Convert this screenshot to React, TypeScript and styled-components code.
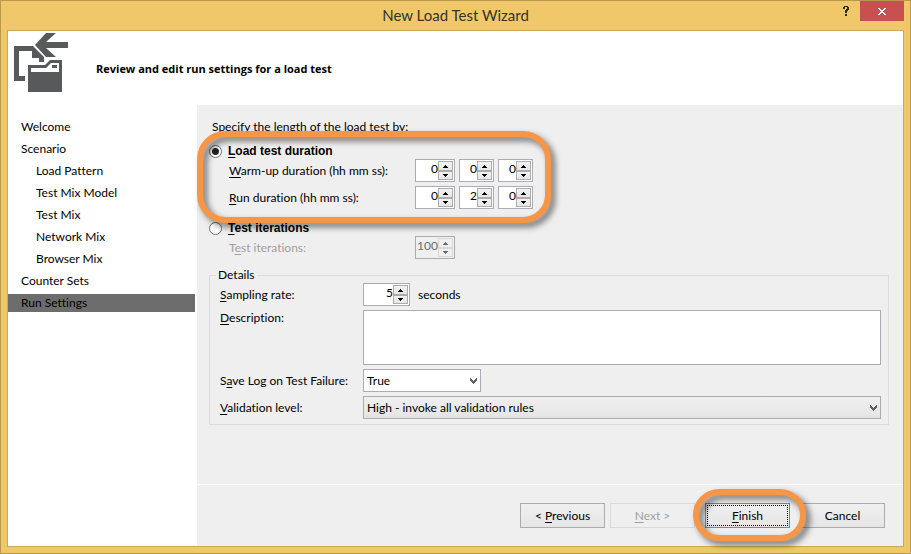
import React, { useId, useState } from "react";
import styled, { createGlobalStyle, css } from "styled-components";

const GlobalStyle = createGlobalStyle`
  *, *::before, *::after { box-sizing: border-box; }
  body { margin: 0; }
  body, button, input, select, textarea {
    font-family: Lato, "Open Sans", sans-serif;
    font-size: 12px;
    line-height: 16px;
    font-variant-ligatures: none;
    color: #000;
  }
  u { text-underline-offset: 2px; text-decoration-skip-ink: none; }
`;

const orangeRing = css`
  content: "";
  position: absolute;
  border: 6px solid #f79646;
  filter: drop-shadow(4px 4px 3px rgba(0, 0, 0, 0.55));
  pointer-events: none;
`;

const Window = styled.div`
  display: flex;
  flex-direction: column;
  min-height: 100vh;
  padding: 0 6px 6px;
  background: #f0c869;
  border: 1px solid #b8994f;
`;

const TitleBar = styled.header`
  position: relative;
  display: flex;
  justify-content: center;
  height: 29px;
`;

const Title = styled.h1`
  margin: 0;
  font-size: 15px;
  font-weight: 400;
  line-height: 29px;
  color: #33332b;
`;

const TitleActions = styled.div`
  position: absolute;
  top: 0;
  right: 0;
  display: flex;
`;

const HelpButton = styled.button`
  width: 28px;
  height: 20px;
  padding: 0;
  border: 0;
  background: none;
`;

const CloseButton = styled.button`
  width: 44px;
  height: 20px;
  padding: 0;
  border: 0;
  background: #c75050;
`;

const TitleGlyph = styled.svg`
  display: block;
  margin: 0 auto;
`;

const Client = styled.div`
  flex: 1;
  display: flex;
  flex-direction: column;
  background: #fff;
  border: 1px solid #cda751;
`;

const Banner = styled.div`
  display: flex;
  align-items: flex-start;
  height: 74px;
  padding-left: 6px;
`;

const WizardIcon = styled.svg`
  flex: none;
  margin-top: 2px;
`;

const BannerText = styled.h2`
  margin: 30px 0 0 28px;
  font-family: "Open Sans", sans-serif;
  font-size: 11px;
  line-height: 16px;
  font-weight: 700;
`;

const Body = styled.div`
  flex: 1;
  display: flex;
`;

const StepList = styled.nav`
  flex: none;
  width: 189px;
  padding: 13px 2px 0 0;
  display: flex;
  flex-direction: column;
  gap: 4px;
`;

const Step = styled.a<{ $nested?: boolean; $current?: boolean }>`
  display: block;
  height: 18px;
  line-height: 18px;
  padding-left: ${(p) => (p.$nested ? 28 : 13)}px;
  color: #000;
  text-decoration: none;
  background: ${(p) => (p.$current ? "#6d6d6d" : "transparent")};
`;

const Main = styled.main`
  flex: 1;
  display: flex;
  flex-direction: column;
  background: #efefef;
`;

const Settings = styled.form`
  flex: 1;
  padding: 14px 14px 0 12px;
`;

const Intro = styled.p`
  margin: 0 0 0 3px;
`;

const DurationGroup = styled.div`
  position: relative;
  padding-top: 8px;
  &::after {
    ${orangeRing}
    top: -4px;
    left: -12px;
    width: 354px;
    height: 92px;
    border-radius: 28px;
  }
`;

const RadioLabel = styled.label`
  display: flex;
  align-items: center;
  gap: 6px;
  height: 16px;
  font: 700 12px/16px "Liberation Sans", sans-serif;
`;

const Radio = styled.input`
  appearance: none;
  width: 13px;
  height: 13px;
  margin: 0;
  border: 1px solid #6e6e6e;
  border-radius: 50%;
  background: #fff;
  &:checked {
    background: radial-gradient(circle, #222 0 3px, #fff 4px);
  }
`;

const TimeRows = styled.div`
  display: grid;
  gap: 4px;
`;

const TimeRow = styled.div<{ $disabled?: boolean }>`
  display: grid;
  grid-template-columns: 182px auto;
  justify-content: start;
  align-items: center;
  gap: 4px;
  padding-left: 20px;
  color: ${(p) => (p.$disabled ? "#a0a0a0" : "#000")};
`;

const Spinners = styled.div`
  display: flex;
  gap: 4px;
`;

const SpinBox = styled.span<{ $width: number; $disabled?: boolean }>`
  display: flex;
  width: ${(p) => p.$width}px;
  height: 23px;
  padding: 1px 1px 1px 0;
  border: 1px solid #abadb3;
  background: ${(p) => (p.$disabled ? "#efefef" : "#fff")};
`;

const SpinInput = styled.input`
  flex: 1;
  min-width: 0;
  height: 16px;
  padding: 0;
  border: 0;
  outline: 0;
  background: none;
  text-align: right;
  &:disabled { color: #6d6d6d; }
`;

const SpinButtons = styled.span`
  display: grid;
  grid-template-rows: 10px 9px;
  width: 15px;
  background: #efefef;
`;

const SpinButton = styled.button`
  display: grid;
  place-items: center;
  padding: 0;
  border: 1px solid #acacac;
  background: linear-gradient(#f2f2f2, #e6e6e6);
  &:disabled { border-color: #d9d9d9; background: #efefef; }
`;

const IterationsGroup = styled.div`
  padding-top: 11px;
  display: grid;
`;

const Details = styled.fieldset`
  min-width: 0;
  margin: 8px 0 0;
  padding: 0 7px 5px 10px;
  border: 1px solid #dcdcdc;
`;

const Legend = styled.legend`
  margin-left: -4px;
  padding: 0 2px;
`;

const FieldGrid = styled.div`
  display: grid;
  grid-template-columns: 139px 1fr;
  gap: 4px;
  align-items: center;
`;

const FieldLabel = styled.label<{ $top?: boolean }>`
  align-self: ${(p) => (p.$top ? "start" : "center")};
  white-space: nowrap;
`;

const Inline = styled.div`
  display: flex;
  align-items: center;
  gap: 8px;
`;

const TextArea = styled.textarea`
  display: block;
  width: 100%;
  height: 55px;
  resize: none;
  border: 1px solid #abadb3;
  background: #fff;
`;

const SelectWrap = styled.div<{ $width: string }>`
  display: grid;
  width: ${(p) => p.$width};
  align-items: center;
  & > * { grid-area: 1 / 1; }
  & > svg { justify-self: end; margin-right: 4px; pointer-events: none; }
`;

const Select = styled.select<{ $flat?: boolean }>`
  appearance: none;
  width: 100%;
  height: 23px;
  padding: 0 3px;
  border: 1px solid ${(p) => (p.$flat ? "#abadb3" : "#acacac")};
  border-radius: 0;
  background: ${(p) => (p.$flat ? "#fff" : "linear-gradient(#f0f0f0, #e4e4e4)")};
`;

const Footer = styled.footer`
  display: flex;
  justify-content: flex-end;
  height: 62px;
  padding: 18px 18px 0 0;
  border-top: 1px solid #fff;
`;

const WizardButton = styled.button<{ $gap?: number }>`
  width: 85px;
  height: 25px;
  margin-left: ${(p) => p.$gap ?? 10}px;
  padding: 0;
  border: 1px solid #acacac;
  background: linear-gradient(#f0f0f0, #e5e5e5);
  &:disabled {
    color: #a0a0a0;
    border-color: #d9d9d9;
    background: #efefef;
  }
`;

const DefaultButton = styled(WizardButton)`
  position: relative;
  border-color: #3399ff;
  outline: 1px dotted #000;
  outline-offset: -3px;
  &::after {
    ${orangeRing}
    top: -15px;
    left: -13px;
    width: 113px;
    height: 52px;
    border-radius: 26px;
  }
`;

function Arrow({ down, muted }: { down?: boolean; muted?: boolean }) {
  return (
    <svg width="5" height="3" viewBox="0 0 5 3" shapeRendering="crispEdges" aria-hidden="true">
      <path d={down ? "M0 0h5v1h-1v1h-1v1h-1v-1h-1v-1h-1z" : "M2 0h1v1h1v1h1v1h-5v-1h1v-1h1z"} fill={muted ? "#6d6d6d" : "#000"} />
    </svg>
  );
}

function Chevron() {
  return (
    <svg width="7" height="6" viewBox="0 0 7 6" shapeRendering="crispEdges" aria-hidden="true">
      <path d="M0 0h1v1h1v1h1v1h1v-1h1v-1h1v-1h1v3h-1v1h-1v1h-1v1h-1v-1h-1v-1h-1v-1h-1z" fill="#606060" />
    </svg>
  );
}

type SpinnerProps = { id?: string; label?: string; initial: number; width: number; disabled?: boolean };

function Spinner({ id, label, initial, width, disabled }: SpinnerProps) {
  const [value, setValue] = useState(initial);
  return (
    <SpinBox $width={width} $disabled={disabled}>
      <SpinInput
        id={id}
        aria-label={label}
        inputMode="numeric"
        value={value}
        disabled={disabled}
        onChange={(e) => setValue(Number(e.target.value) || 0)}
      />
      <SpinButtons>
        <SpinButton type="button" aria-label="Increase" disabled={disabled} onClick={() => setValue(value + 1)}>
          <Arrow muted={disabled} />
        </SpinButton>
        <SpinButton type="button" aria-label="Decrease" disabled={disabled} onClick={() => setValue(Math.max(0, value - 1))}>
          <Arrow down muted={disabled} />
        </SpinButton>
      </SpinButtons>
    </SpinBox>
  );
}

function Duration({ mnemonic, rest, values }: { mnemonic: string; rest: string; values: number[] }) {
  const id = useId();
  return (
    <TimeRow>
      <label htmlFor={id}><u>{mnemonic}</u>{rest}</label>
      <Spinners>
        <Spinner id={id} initial={values[0]} width={40} />
        <Spinner label="Minutes" initial={values[1]} width={35} />
        <Spinner label="Seconds" initial={values[2]} width={35} />
      </Spinners>
    </TimeRow>
  );
}

const steps = [
  { name: "Welcome" },
  { name: "Scenario" },
  { name: "Load Pattern", nested: true },
  { name: "Test Mix Model", nested: true },
  { name: "Test Mix", nested: true },
  { name: "Network Mix", nested: true },
  { name: "Browser Mix", nested: true },
  { name: "Counter Sets" },
  { name: "Run Settings", current: true },
];

export default function App() {
  const [mode, setMode] = useState("duration");
  return (
    <>
      <GlobalStyle />
      <Window>
        <TitleBar>
          <Title>New Load Test Wizard</Title>
          <TitleActions>
            <HelpButton type="button" aria-label="Help">
              <TitleGlyph width="7" height="10" viewBox="0 0 7 10" shapeRendering="crispEdges">
                <path d="M1 0h4v1h1v3h-1v1h-1v2h-2v-3h1v-1h1v-2h-2v2h-2v-2h1zM2 8h2v2h-2z" fill="#2a2820" />
              </TitleGlyph>
            </HelpButton>
            <CloseButton type="button" aria-label="Close">
              <TitleGlyph width="8" height="7" viewBox="0 0 8 7" shapeRendering="crispEdges">
                <path d="M0 0h2v1h1v1h2v-1h1v-1h2v1h-1v1h-1v1h-1v1h1v1h1v1h1v1h-2v-1h-1v-1h-2v1h-1v1h-2v-1h1v-1h1v-1h1v-1h-1v-1h-1v-1h-1z" fill="#fff" />
              </TitleGlyph>
            </CloseButton>
          </TitleActions>
        </TitleBar>
        <Client>
          <Banner>
            <WizardIcon width="54" height="59" viewBox="0 0 54 59" aria-hidden="true">
              <g fill="#58595b">
                <path d="M32 0h10L32 9h22v6H32l10 9H32L21 12z" />
                <path d="M0 13h19l11 11v5h-5v-4h-7v-7H5v25h6v5H0z" />
                <path fillRule="evenodd" d="M14 32h17l5-5h12v32H14zM17 35v4h28v-9h-8l-5 5zM38 32h5v3h-5z" />
              </g>
            </WizardIcon>
            <BannerText>Review and edit run settings for a load test</BannerText>
          </Banner>
          <Body>
            <StepList aria-label="Wizard steps">
              {steps.map((s) => (
                <Step key={s.name} href="#" $nested={s.nested} $current={s.current} aria-current={s.current ? "step" : undefined}>
                  {s.name}
                </Step>
              ))}
            </StepList>
            <Main>
              <Settings>
                <Intro>Specify the length of the load test by:</Intro>
                <DurationGroup>
                  <RadioLabel>
                    <Radio type="radio" name="mode" checked={mode === "duration"} onChange={() => setMode("duration")} />
                    <span><u>L</u>oad test duration</span>
                  </RadioLabel>
                  <TimeRows>
                    <Duration mnemonic="W" rest="arm-up duration (hh mm ss):" values={[0, 0, 0]} />
                    <Duration mnemonic="R" rest="un duration (hh mm ss):" values={[0, 2, 0]} />
                  </TimeRows>
                </DurationGroup>
                <IterationsGroup>
                  <RadioLabel>
                    <Radio type="radio" name="mode" checked={mode === "iterations"} onChange={() => setMode("iterations")} />
                    <span><u>T</u>est iterations</span>
                  </RadioLabel>
                  <TimeRow $disabled>
                    <label htmlFor="iterations">T<u>e</u>st iterations:</label>
                    <Spinner id="iterations" initial={100} width={40} disabled />
                  </TimeRow>
                </IterationsGroup>
                <Details>
                  <Legend>Details</Legend>
                  <FieldGrid>
                    <FieldLabel htmlFor="sampling"><u>S</u>ampling rate:</FieldLabel>
                    <Inline>
                      <Spinner id="sampling" initial={5} width={47} />
                      <span>seconds</span>
                    </Inline>
                    <FieldLabel htmlFor="description" $top><u>D</u>escription:</FieldLabel>
                    <TextArea id="description" />
                    <FieldLabel htmlFor="savelog">S<u>a</u>ve Log on Test Failure:</FieldLabel>
                    <SelectWrap $width="118px">
                      <Select id="savelog" $flat defaultValue="True">
                        <option>True</option>
                        <option>False</option>
                      </Select>
                      <Chevron />
                    </SelectWrap>
                    <FieldLabel htmlFor="validation"><u>V</u>alidation level:</FieldLabel>
                    <SelectWrap $width="100%">
                      <Select id="validation">
                        <option>High - invoke all validation rules</option>
                      </Select>
                      <Chevron />
                    </SelectWrap>
                  </FieldGrid>
                </Details>
              </Settings>
              <Footer>
                <WizardButton type="button">&lt; <u>P</u>revious</WizardButton>
                <WizardButton type="button" $gap={5} disabled><u>N</u>ext &gt;</WizardButton>
                <DefaultButton type="button"><u>F</u>inish</DefaultButton>
                <WizardButton type="button">Cancel</WizardButton>
              </Footer>
            </Main>
          </Body>
        </Client>
      </Window>
    </>
  );
}
